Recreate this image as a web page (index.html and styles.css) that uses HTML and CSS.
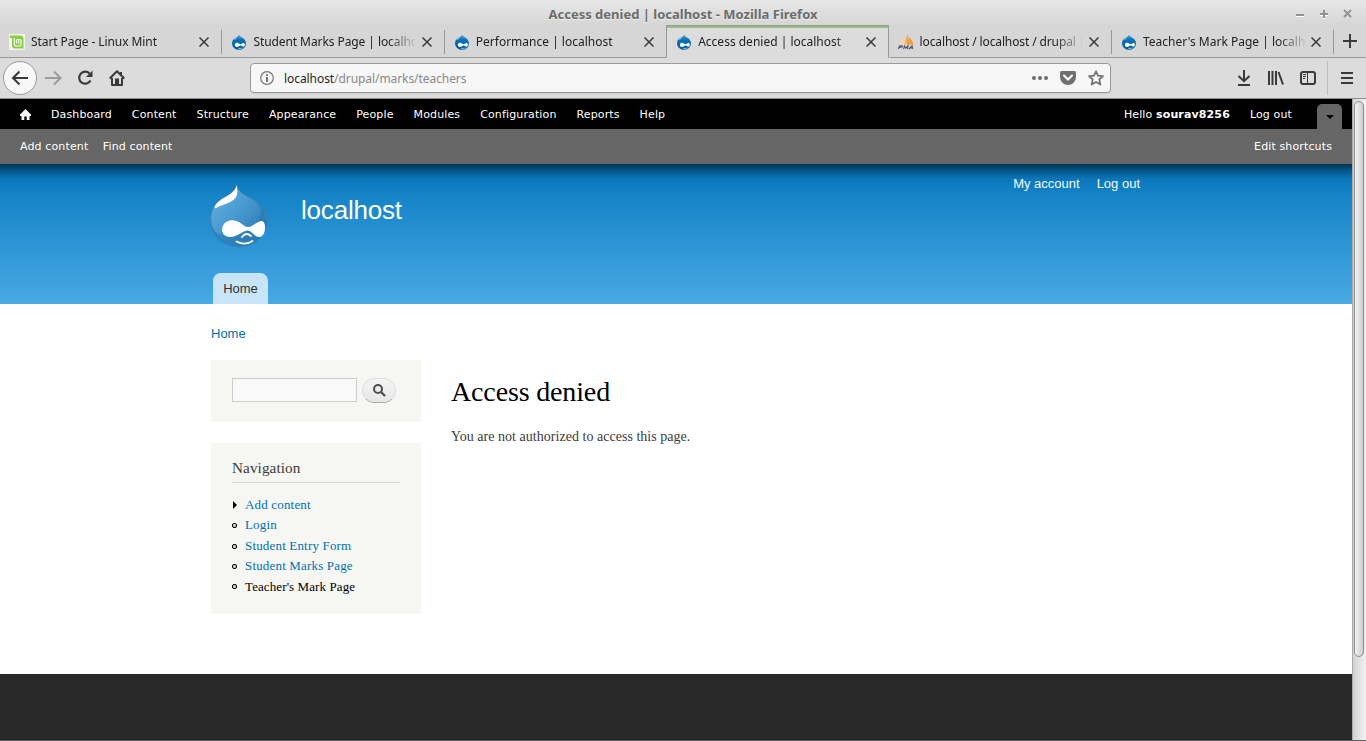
FILE: index.html
```
<!DOCTYPE html>
<html lang="en">
<head>
<meta charset="utf-8">
<title>Access denied | localhost</title>
<link rel="stylesheet" href="styles.css">
</head>
<body>
<svg width="0" height="0" class="defs">
  <defs>
    <linearGradient id="favdrop" x1="0" y1="0" x2="0" y2="1"><stop offset="0" stop-color="#66a9d2"/><stop offset=".35" stop-color="#0673b8"/><stop offset="1" stop-color="#035b9b"/></linearGradient>
    <linearGradient id="drop" x1="0" y1="0" x2="1" y2="1"><stop offset="0" stop-color="#6ab4e0"/><stop offset=".5" stop-color="#4598cf"/><stop offset="1" stop-color="#236fa6"/></linearGradient>
    <linearGradient id="sail" x1="0" y1="0" x2="1" y2="0"><stop offset="0" stop-color="#fbdcb0"/><stop offset="1" stop-color="#f8901f"/></linearGradient>
    <symbol id="fav" viewBox="0 0 16 16">
      <path d="M8 .4C8.300 2 9.800 2.600 11.500 3.700C13.600 5 15 7 15 9.500A7 6.300 0 0 1 1 9.500C1 7 2.300 5 4.500 3.800C6.200 2.800 7.700 2 8 .4Z" fill="url(#favdrop)"/>
      <path d="M2.500 6Q3.600 4.300 5.700 3.800Q5 5.500 2.500 6Z" fill="#b9daec"/>
      <path d="M5.800 8.800C7.400 8.500 8.300 10.200 9.500 10.200C10.700 10.200 11.600 8.800 12.800 9.100C14.500 9.600 14.100 12.700 12.500 12.700C11.300 12.700 10.700 11.500 9.700 11.600C8.400 11.700 7.700 13 6 12.900C3.200 12.800 3.200 9.200 5.800 8.800Z" fill="#fff"/>
      <path d="M7.300 14.300Q9.500 15 11.300 14" stroke="#8fc6e3" fill="none"/>
    </symbol>
    <symbol id="close" viewBox="0 0 10 10"><path d="M.5 .5L9.500 9.500M9.500 .5L.5 9.500" stroke="#3a3a3a" stroke-width="1.500" fill="none"/></symbol>
  </defs>
</svg>

<header class="titlebar">
  <span class="window-title">Access denied | localhost - Mozilla Firefox</span>
  <svg class="window-buttons" width="58" height="12" viewBox="0 0 58 12"><g stroke="#fff" transform="translate(0 1)" stroke-width="2"><path d="M1 7H9"/><path d="M25 6H33M29 2V10"/></g><g stroke="#929292" stroke-width="2" fill="none"><path d="M1 7H9M25 6H33M29 2V10M49 2L56 9M56 2L49 9"/></g></svg>
</header>

<nav class="tabs">
  <div class="tab"><svg class="fav" viewBox="0 0 16 16"><path d="M0 0H16V16H0Z" fill="#f3f3f1"/><path d="M1 1.500H11Q14.500 1.500 14.500 5V14.500H6Q3 14.500 3 11V4H1Z" fill="#87cf3e"/><path d="M5.300 4V10.500Q5.300 12 7 12H10.500Q12 12 12 10.500V6.700Q12 5.500 10.800 5.500T9.700 6.700V9.500M9.700 6.700Q9.700 5.500 8.600 5.500T7.400 6.700V9.500" fill="none" stroke="#fff" stroke-width="1.100"/></svg><span class="tab-text tight">Start Page - Linux Mint</span><svg class="x"><use href="#close"/></svg></div>
  <div class="tab"><svg class="fav"><use href="#fav"/></svg><span class="tab-text tight">Student Marks Page | localhost</span><svg class="x"><use href="#close"/></svg></div>
  <div class="tab plain-end"><svg class="fav"><use href="#fav"/></svg><span class="tab-text">Performance | localhost</span><svg class="x"><use href="#close"/></svg></div>
  <div class="tab active"><svg class="fav"><use href="#fav"/></svg><span class="tab-text">Access denied | localhost</span><svg class="x"><use href="#close"/></svg></div>
  <div class="tab"><svg class="fav" viewBox="0 0 16 16"><path d="M4.500 1.500Q4.500 7 .5 11Q3 10.300 5 10.800Z" fill="#fbd5a5"/><path d="M9 0Q11.500 6 10.700 11Q7.500 9.800 4.500 10.800Q8.500 6 9 0Z" fill="url(#sail)"/><path d="M11 3Q14.500 6 15.700 11Q13 9.800 11.200 11Z" fill="#f89c30"/><path d="M.5 15L1.500 11.900H4Q5 13.500 1.500 13.500M5.500 15L6.500 12L8 14L10 12L9.500 15M11 15L14 12L14.800 15M12 14H14.500" fill="none" stroke="#55577e" stroke-width="1.200"/></svg><span class="tab-text tighter">localhost / localhost / drupal | phpMyAdmin</span><svg class="x"><use href="#close"/></svg></div>
  <div class="tab"><svg class="fav"><use href="#fav"/></svg><span class="tab-text">Teacher's Mark Page | localhost</span><svg class="x"><use href="#close"/></svg></div>
  <div class="new-tab"><svg width="14" height="14" viewBox="0 0 14 14"><path d="M7 0V14M0 7H14" stroke="#3a3a3a" stroke-width="2"/></svg></div>
</nav>

<div class="toolbar">
  <div class="back"><svg width="18" height="16" viewBox="0 0 18 16"><path d="M8.500 1.500L2 8L8.500 14.500M2 8H17" stroke="#3a3a3a" stroke-width="2" fill="none"/></svg></div>
  <svg class="forward" width="17" height="16" viewBox="0 0 17 16"><path d="M9 1.500L15.500 8L9 14.500M15.500 8H0" stroke="#9b9b9b" stroke-width="2" fill="none"/></svg>
  <svg class="reload" width="16" height="16" viewBox="0 0 16 16"><path d="M12.500 3.500A6 6 0 1 0 13.500 10.500" stroke="#3a3a3a" stroke-width="2.200" fill="none"/><path d="M15.500 .5V7H9Z" fill="#3a3a3a"/></svg>
  <svg class="home" width="16" height="16" viewBox="0 0 16 16"><path d="M.7 8.500L8 1.300L15.300 8.500M3 8V14.900H13V8" stroke="#3a3a3a" stroke-width="2" stroke-linejoin="round" fill="none"/><path d="M6 15V8.500H10V15ZM11 2H13V6L11 4Z" fill="#3a3a3a"/></svg>
  <div class="urlbar">
    <svg width="14" height="14" viewBox="0 0 14 14"><circle cx="7" cy="7" r="6.300" stroke="#777" stroke-width="1.200" fill="none"/><path d="M7 6V11M7 3.200V4.900" stroke="#666" stroke-width="1.800"/></svg>
    <span class="url">localhost<span class="path">/drupal/marks/teachers</span></span>
    <svg class="dots" width="16" height="4" viewBox="0 0 16 4"><g fill="#6b6b6b"><circle cx="2" cy="2" r="2"/><circle cx="8" cy="2" r="2"/><circle cx="14" cy="2" r="2"/></g></svg>
    <svg width="16" height="14" viewBox="0 0 16 14"><path d="M1.500 0H14.500Q16 0 16 1.500V6A8 8 0 0 1 0 6V1.500Q0 0 1.500 0Z" fill="#707070"/><path d="M4 4.500L8 8.500L12 4.500" stroke="#fff" stroke-width="2" fill="none" stroke-linecap="round"/></svg>
    <svg class="star" width="16" height="16" viewBox="0 0 16 16"><path d="M8 1.300L10 5.700L15 6.200L11.300 9.500L12.400 14.600L8 12L3.600 14.600L4.700 9.500L1 6.200L6 5.700Z" fill="none" stroke="#707070" stroke-width="1.700" stroke-linejoin="round"/></svg>
  </div>
  <div class="tools">
    <svg width="14" height="16" viewBox="0 0 14 16"><path d="M7 0V11M1.500 6L7 11.200L12.500 6M1 15H13" stroke="#3a3a3a" stroke-width="2" fill="none"/></svg>
    <svg width="16" height="14" viewBox="0 0 16 14"><path d="M1 0V14M4.500 0V14M8 0V14" stroke="#3a3a3a" stroke-width="2"/><path d="M10.500 1L15 13.500" stroke="#3a3a3a" stroke-width="2"/></svg>
    <svg width="16" height="14" viewBox="0 0 16 14"><rect x="1" y="1" width="14" height="12" rx="2" fill="none" stroke="#3a3a3a" stroke-width="2"/><path d="M7.500 1V13" stroke="#3a3a3a"/><path d="M3 3.500H6M3 5.500H6M3 7.500H5" stroke="#3a3a3a"/></svg>
  </div>
  <div class="menu"><svg width="12" height="12" viewBox="0 0 12 12"><path d="M0 1H12M0 6H12M0 11H12" stroke="#3a3a3a" stroke-width="2"/></svg></div>
</div>

<div class="viewport">
  <div class="page">
    <div class="admin">
      <svg class="admin-home" width="11" height="11" viewBox="0 0 11 11"><path d="M5.500 0L11 5.500V7H9.500V11H6.700V7.500H4.300V11H1.500V7H0V5.500Z" fill="#fff"/></svg>
      <a>Dashboard</a><a>Content</a><a>Structure</a><a>Appearance</a><a>People</a><a>Modules</a><a>Configuration</a><a>Reports</a><a>Help</a>
      <span class="hello">Hello <b>sourav8256</b></span><a class="out">Log out</a>
      <span class="toggle"><svg width="8" height="4" viewBox="0 0 8 4"><path d="M0 0H8L4 4Z" fill="#000"/></svg></span>
    </div>
    <div class="shortcuts"><a>Add content</a><a>Find content</a><a class="edit">Edit shortcuts</a></div>
    <div class="site-header">
      <div class="brand">
        <svg class="logo" width="59" height="66" viewBox="0 0 59 66">
          <path d="M27 .8C27 7 31 10 39 14C50 19 57 27 57 37A28.300 27.500 0 0 1 .5 37C.5 27 4 20 13 15C20 11 26 7 27 .8Z" fill="url(#drop)" stroke="#3778a4" stroke-width=".8"/>
          <path d="M2 46Q5 55 13 60Q30 69 45 60Q55 53 57 42L55 35Q44 50 20 53Q8 53 2 46Z" fill="#2878b3" opacity=".55"/>
          <path d="M28 3C33 13 50 17 51 28C51 37 44 43 34 46C52 43 57 35 53 26C48 18 35 13 28 3Z" fill="#2278b5" opacity=".55"/>
          <path d="M26.500 2C26 8 19 12 12 16C5 20 3 27 6 25C14 21 25 19 27 12Q28 7 26.500 2Z" fill="#fff"/>
          <path d="M20 37.500C29 36 33 44 38 44C43 44 48 37 52 38C57 39 56 54 49 54C44 54 42 47 37 47.500C32 48 28 54 20 54C9 54 10 39 20 37.500Z" fill="#fff"/>
          <path d="M26.500 58.500Q35 63 42.500 58M32 54Q36 48.500 41 53" fill="none" stroke="#fff" stroke-width="1.800" stroke-linecap="round"/>
        </svg>
        <span class="site-name">localhost</span>
        <div class="user-links"><a>My account</a><a>Log out</a></div>
      </div>
      <a class="main-tab">Home</a>
    </div>
    <div class="content">
      <a class="crumb">Home</a>
      <div class="columns">
        <aside>
          <div class="block search"><span class="field"></span><span class="search-btn"><svg width="13" height="13" viewBox="0 0 13 13"><circle cx="5" cy="5" r="4" fill="none" stroke="#4d4d4d" stroke-width="2"/><path d="M8 8L12 12" stroke="#4d4d4d" stroke-width="2.300"/></svg></span></div>
          <div class="block nav">
            <h2>Navigation</h2>
            <ul>
              <li><svg class="bullet" viewBox="0 0 6 8"><path d="M1 0L5 4L1 8Z"/></svg><a>Add content</a></li>
              <li><i></i><a>Login</a></li>
              <li><i></i><a>Student Entry Form</a></li>
              <li><i></i><a>Student Marks Page</a></li>
              <li><i></i><a class="current">Teacher's Mark Page</a></li>
            </ul>
          </div>
        </aside>
        <main><h1>Access denied</h1><p>You are not authorized to access this page.</p></main>
      </div>
    </div>
    <footer></footer>
  </div>
  <div class="scrollbar"><div class="thumb"></div></div>
</div>
<div class="window-edge"></div>
</body>
</html>
```
FILE: styles.css
```
* { box-sizing: border-box; }
body { margin: 0; width: 1366px; height: 741px; overflow: hidden; display: flex; flex-direction: column; font-family: "Noto Sans", sans-serif; background: #d6d6d6; }
svg { display: block; flex: none; }
.defs { position: absolute; }

/* Browser window */
.titlebar { height: 25px; flex: none; position: relative; background: linear-gradient(#e7e7e7, #d6d6d6); text-align: center; }
.window-title { font-size: 13px; font-weight: 700; line-height: 29px; color: #6c6c6c; text-shadow: 0 1px #eee; }
.window-buttons { position: absolute; left: 1295px; top: 8px; }
.tabs { display: flex; height: 33px; flex: none; background: #d6d6d6; }
.tab { position: relative; flex: none; width: 222.400px; height: 33px; display: flex; align-items: center; padding: 1px 13px 0 9px; border-bottom: 1px solid #989898; font-size: 12px; color: #222; }
.tab::after { content: ""; position: absolute; right: 0; top: 5px; width: 1px; height: 24px; background: #999; }
.tab.active::after, .tab.plain-end::after { display: none; }
.tab.active { width: 222.900px; margin: 0 -.5px 0 -1px; padding: 0 12px 0 9px; background: #dcdcdc; border: 1px solid #999; border-bottom: 0; box-shadow: inset 0 2px #9cba80; }
.tab.active + .tab { margin-left: 1px; width: 222.400px; padding-left: 8px; }
.fav { width: 16px; height: 16px; margin-right: 6px; }
.tab-text { width: 162px; height: 20px; line-height: 20px; overflow: hidden; white-space: nowrap; -webkit-mask-image: linear-gradient(90deg, #000 135px, transparent 165px); mask-image: linear-gradient(90deg, #000 135px, transparent 165px); }
.tight { letter-spacing: -.08px; }
.tighter { letter-spacing: -.12px; }
.x { width: 10px; height: 10px; margin-left: auto; }
.new-tab { flex: 1; border-bottom: 1px solid #989898; padding: 9px 0 0 9px; }
.toolbar { height: 41px; flex: none; display: flex; align-items: center; padding: 0 13px 1px 3px; background: #dcdcdc; border-bottom: 1px solid #8c8e8b; }
.back { width: 34px; height: 34px; border: 1px solid #999; border-radius: 50%; background: #f8f8f8; display: flex; align-items: center; justify-content: center; }
.forward { margin-left: 8px; }
.reload { margin-left: 15px; }
.home { margin-left: 16px; }
.urlbar { width: 861px; height: 30px; margin-left: 125px; border: 1px solid #999; border-radius: 4px; background: #f7f7f7; display: flex; align-items: center; padding: 0 6px 0 9px; box-shadow: 0 1px 1px #ccc; }
.url { font-size: 12px; margin: 1px 0 0 10px; letter-spacing: -.07px; color: #1f1f1f; }
.path { color: #888; }
.dots { margin-left: auto; margin-right: 12px; }
.star { margin-left: 12px; }
.tools { display: flex; align-items: center; gap: 16.500px; margin-left: 126px; }
.menu { height: 34px; margin-left: auto; padding-left: 13px; border-left: 1px solid #bbb; display: flex; align-items: center; }
.viewport { height: 641px; display: flex; flex: none; }
.scrollbar { width: 14px; border-left: 1px solid #aaa; background: linear-gradient(90deg, #d2d2d2, #f2f2f2); padding: 2px 2px 0 1px; }
.thumb { width: 10px; height: 556px; border: 1px solid #8d8d8d; border-radius: 5px; background: linear-gradient(90deg, #f4f4f4, #ccc); }
.window-edge { height: 1px; flex: none; background: #626262; }

/* Drupal administration */
.page { width: 1352px; display: flex; flex-direction: column; background: #fff; }
.admin, .shortcuts { font: 11px/32px "DejaVu Sans", sans-serif; letter-spacing: .13px; color: #fff; display: flex; }
.admin { height: 30px; background: #000; padding-left: 20px; align-items: center; gap: 20px; }
.admin a, .hello { padding-top: 1px; }
.hello { margin-left: auto; }
.out { margin-right: 5px; }
.toggle { width: 25px; height: 25px; align-self: flex-end; margin-right: 10px; background: #666; border-radius: 5px 5px 0 0; display: flex; align-items: center; justify-content: center; }
.shortcuts { height: 35px; background: #666; padding: 0 20px; gap: 14.500px; line-height: 36px; }
.edit { margin-left: auto; }

/* Site */
.site-header { height: 140px; padding-left: 210px; background: linear-gradient(#003352, #04588b 7px, #0c76ba 15px, #117ec4 24px, transparent 32px), linear-gradient(#0779bf, #48a9e4); }
.brand { height: 109px; display: flex; align-items: flex-start; font-family: "Liberation Sans", sans-serif; color: #fff; }
.logo { margin-top: 19px; }
.site-name { font-size: 26px; line-height: 30px; letter-spacing: -.2px; margin: 31px 0 0 32px; }
.user-links { margin: 12px 212px 0 auto; display: flex; gap: 17px; font-size: 13px; line-height: 16px; color: #f4f9fd; }
.main-tab { display: block; width: 55px; height: 31px; margin-left: 3px; border-radius: 8px 8px 0 0; background: #c8e5f7; color: #333; font: 13px/31px "Liberation Sans", sans-serif; text-align: center; }
.content { height: 370px; padding: 21px 0 0 211px; }
.crumb { display: block; height: 35px; color: #0071b3; font: 13px/18px "Liberation Sans", sans-serif; }
.columns { display: flex; gap: 30px; font-family: "Liberation Serif", serif; }
aside { width: 210px; display: flex; flex-direction: column; gap: 21px; }
.block { background: #f6f6f2; }
.search { height: 62px; display: flex; padding: 18px 21px; gap: 5px; }
.field { width: 125px; height: 24px; border: 1px solid #ccc; background: #f9f9f9; }
.search-btn { width: 34px; height: 25px; border: 1px solid #ddd; border-bottom-color: #aaa; border-radius: 13px; background: linear-gradient(#f3f3f3, #e7e7e7); display: flex; align-items: center; justify-content: center; }
.nav { height: 171px; padding: 16px 21px 0; }
h2 { margin: 0 0 12px; height: 24px; border-bottom: 1px solid #d6d6d6; color: #3b3b3b; font-size: 15.200px; font-weight: 400; line-height: 18px; letter-spacing: .1px; }
ul { margin: 0; padding: 0; list-style: none; }
li { height: 20.450px; line-height: 20.450px; font-size: 13px; letter-spacing: .17px; display: flex; align-items: center; color: #0071b3; }
.bullet { width: 6px; height: 8px; margin-right: 7px; }
li i { width: 5px; height: 5px; border: 1px solid #000; border-radius: 2px; background: #ccc; margin-right: 8px; }
.current { color: #000; letter-spacing: .1px; }
h1 { margin: 15px 0 0; font-size: 28px; font-weight: 400; line-height: 34px; letter-spacing: -.15px; color: #000; }
p { margin: 18px 0 0; font-size: 14px; line-height: 20px; letter-spacing: .03px; color: #3b3b3b; }
footer { flex: 1; background: #292929; border-bottom: 1px solid #1e1e1e; }
```
